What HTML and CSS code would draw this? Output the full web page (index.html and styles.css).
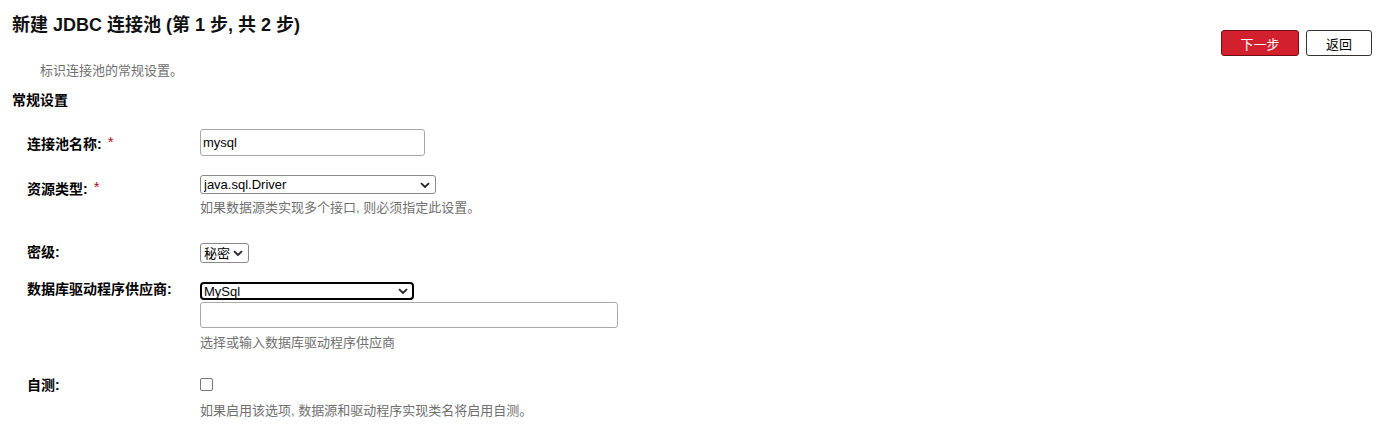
FILE: index.html
```html
<!DOCTYPE html>
<html lang="zh-CN">
<head>
  <meta charset="UTF-8" />
  <title>新建 JDBC 连接池 (第 1 步, 共 2 步)</title>
  <link rel="stylesheet" href="styles.css">
</head>
<body>

  <div class="title-bar">
    <h1>新建 JDBC 连接池 (第 1 步, 共 2 步)</h1>
    <div class="buttons">
      <button class="btn btn-primary">下一步</button>
      <button class="btn">返回</button>
    </div>
  </div>

  <p class="page-help">标识连接池的常规设置。</p>

  <h2 class="section-title">常规设置</h2>

  <div class="form">
    <div class="row row-name">
      <label>连接池名称:<span class="req">*</span></label>
      <div class="field">
        <input type="text" class="text-input name-input" value="mysql" />
      </div>
    </div>

    <div class="row row-type">
      <label>资源类型:<span class="req">*</span></label>
      <div class="field">
        <span class="select-wrap">
          <select class="select type-select">
            <option>java.sql.Driver</option>
          </select>
          <svg class="chevron" width="10" height="7" viewBox="0 0 10 7"><path d="M1 1.2 L5 5 L9 1.2" fill="none" stroke="#222" stroke-width="1.8"/></svg>
        </span>
        <div class="help">如果数据源类实现多个接口, 则必须指定此设置。</div>
      </div>
    </div>

    <div class="row row-level">
      <label>密级:</label>
      <div class="field">
        <span class="select-wrap">
          <select class="select level-select">
            <option>秘密</option>
          </select>
          <svg class="chevron" width="10" height="7" viewBox="0 0 10 7"><path d="M1 1.2 L5 5 L9 1.2" fill="none" stroke="#222" stroke-width="1.8"/></svg>
        </span>
      </div>
    </div>

    <div class="row row-vendor">
      <label>数据库驱动程序供应商:</label>
      <div class="field">
        <span class="select-wrap">
          <select class="select vendor-select">
            <option>MySql</option>
          </select>
          <svg class="chevron" width="10" height="7" viewBox="0 0 10 7"><path d="M1 1.2 L5 5 L9 1.2" fill="none" stroke="#222" stroke-width="1.8"/></svg>
        </span>
        <input type="text" class="text-input vendor-input" value="" />
        <div class="help">选择或输入数据库驱动程序供应商</div>
      </div>
    </div>

    <div class="row row-ping">
      <label>自测:</label>
      <div class="field">
        <input type="checkbox" class="check" />
        <div class="help">如果启用该选项, 数据源和驱动程序实现类名将启用自测。</div>
      </div>
    </div>
  </div>

</body>
</html>
```

FILE: styles.css
```css
body {
  margin: 0;
  font-family: "Liberation Sans", Arial, "Noto Sans CJK SC", sans-serif;
  font-size: 13px;
  color: #000;
  background: #fff;
}

.title-bar {
  display: flex;
  justify-content: space-between;
  align-items: flex-start;
}

h1 {
  margin: 14px 0 0 12px;
  font-size: 18px;
  line-height: 22px;
  font-weight: bold;
  color: #111;
}

.buttons {
  display: flex;
  gap: 7px;
  margin: 30px 12px 0 0;
}

.btn {
  font-family: inherit;
  font-size: 13px;
  height: 26px;
  width: 66px;
  padding: 0;
  background: #fff;
  color: #000;
  border: 1px solid #333;
  border-radius: 3px;
}

.btn-primary {
  width: 78px;
  background: #d3202e;
  border-color: #6e1016;
  color: #fff;
}

.page-help {
  margin: 7px 0 0 40px;
  line-height: 16px;
  color: #6f6f6f;
}

.section-title {
  margin: 13px 0 0 12px;
  font-size: 14px;
  line-height: 17px;
}

.form {
  padding-left: 27px;
  margin-top: 20px;
}

.row {
  display: grid;
  grid-template-columns: 173px auto;
}

.row label {
  font-size: 14px;
  font-weight: bold;
  line-height: 16px;
}

.req {
  color: #a8141c;
  font-size: 15px;
  font-weight: normal;
  margin-left: 6px;
  vertical-align: 2px;
}

.field {
  display: flex;
  flex-direction: column;
  align-items: flex-start;
}

.help {
  color: #6f6f6f;
  line-height: 16px;
}

.text-input {
  box-sizing: border-box;
  font-family: inherit;
  font-size: 13px;
  color: #000;
  border: 1px solid #a9a9a9;
  border-radius: 3px;
  padding: 0 2px;
  margin: 0;
  outline: none;
}

.name-input {
  width: 225px;
  height: 27px;
}

.vendor-input {
  width: 418px;
  height: 26px;
  margin-top: 2px;
}

.select-wrap {
  position: relative;
  display: inline-block;
}

.select {
  appearance: none;
  box-sizing: border-box;
  font-family: inherit;
  font-size: 13px;
  color: #000;
  background: #fff;
  border: 1px solid #8a8a8a;
  border-radius: 3px;
  padding: 0 0 0 3px;
  margin: 0;
  display: block;
}

.chevron {
  position: absolute;
  right: 6px;
  top: 50%;
  margin-top: -3px;
  pointer-events: none;
}

.type-select {
  width: 236px;
  height: 19px;
}

.level-select {
  width: 49px;
  height: 20px;
}

.vendor-select {
  width: 214px;
  height: 18px;
  border: 2px solid #000;
  border-radius: 4px;
  padding-left: 2px;
}

.check {
  appearance: none;
  box-sizing: border-box;
  width: 13px;
  height: 13px;
  margin: 0;
  border: 1px solid #767676;
  border-radius: 2px;
  background: #fff;
}

/* vertical rhythm of the form rows */
.row-name label { padding-top: 5px; }

.row-type { margin-top: 19px; }
.row-type label { padding-top: 4px; }
.row-type .help { margin-top: 6px; }

.row-level { margin-top: 27px; }
.row-level label { padding-top: 1px; }

.row-vendor { margin-top: 19px; }
.row-vendor label { padding-top: 0; margin-top: -1px; }
.row-vendor .help { margin-top: 7px; }

.row-ping { margin-top: 27px; }
.row-ping label { margin-top: -1px; }
.row-ping .help { margin-top: 12px; }
```
